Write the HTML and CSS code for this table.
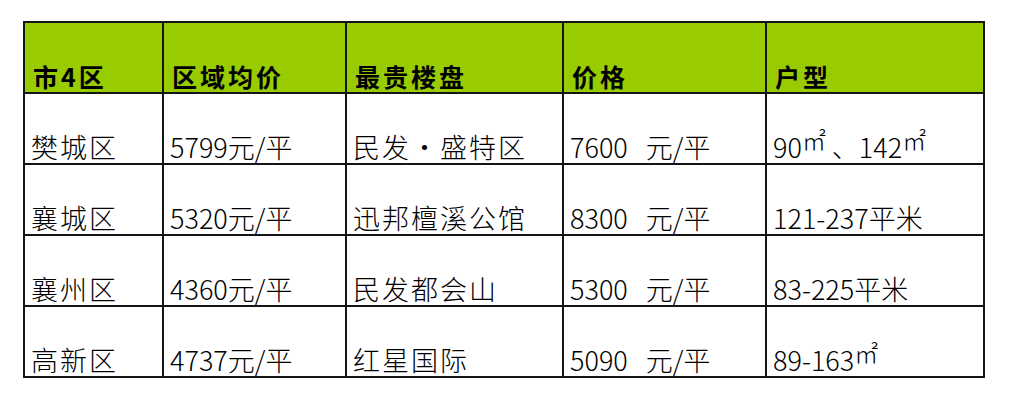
FILE: index.html
```html
<!DOCTYPE html>
<html lang="zh-CN">
<head>
<meta charset="utf-8">
<title>房价表</title>
<link rel="stylesheet" href="styles.css">
</head>
<body>
<table class="price-table">
  <colgroup>
    <col class="c1"><col class="c2"><col class="c3"><col class="c4"><col class="c5">
  </colgroup>
  <thead>
    <tr class="head">
      <th>市4区</th>
      <th>区域均价</th>
      <th>最贵楼盘</th>
      <th>价格</th>
      <th>户型</th>
    </tr>
  </thead>
  <tbody>
    <tr>
      <td class="cjk">樊城区</td>
      <td>5799元/平</td>
      <td class="cjk">民发・盛特区</td>
      <td class="price">7600 元/平</td>
      <td>90<span class="sqm">㎡</span> 、142<span class="sqm">㎡</span></td>
    </tr>
    <tr>
      <td class="cjk">襄城区</td>
      <td>5320元/平</td>
      <td class="cjk">迅邦檀溪公馆</td>
      <td class="price">8300 元/平</td>
      <td>121-237平米</td>
    </tr>
    <tr>
      <td class="cjk">襄州区</td>
      <td>4360元/平</td>
      <td class="cjk">民发都会山</td>
      <td class="price">5300 元/平</td>
      <td>83-225平米</td>
    </tr>
    <tr>
      <td class="cjk">高新区</td>
      <td>4737元/平</td>
      <td class="cjk">红星国际</td>
      <td class="price">5090 元/平</td>
      <td>89-163<span class="sqm">㎡</span></td>
    </tr>
  </tbody>
</table>
</body>
</html>
```
FILE: styles.css
```css
html, body {
  margin: 0;
  padding: 0;
  background: #ffffff;
}

body {
  font-family: "Noto Sans CJK SC", "Noto Sans", sans-serif;
  color: #000000;
}

.price-table {
  margin: 21px 0 0 23px;
  border-collapse: collapse;
  table-layout: fixed;
  width: 960px;
}

.c1 { width: 139px; }
.c2 { width: 183px; }
.c3 { width: 217px; }
.c4 { width: 203px; }
.c5 { width: 218px; }

.price-table th,
.price-table td {
  border: 2px solid #151515;
  height: 68px;
  padding: 0 0 1px 6px;
  vertical-align: bottom;
  text-align: left;
  white-space: nowrap;
  line-height: 30px;
}

.price-table th {
  background: #99cc00;
  font-size: 25px;
  font-weight: 700;
  letter-spacing: 3px;
  padding-left: 8px;
}

.price-table td {
  font-size: 27px;
  font-weight: 300;
  letter-spacing: 0;
}

.price-table td.cjk {
  letter-spacing: 2px;
}

.price-table td.price {
  word-spacing: 12px;
}

.sqm {
  font-size: 24px;
  line-height: 20px;
  vertical-align: 8px;
  letter-spacing: 0;
}
```
